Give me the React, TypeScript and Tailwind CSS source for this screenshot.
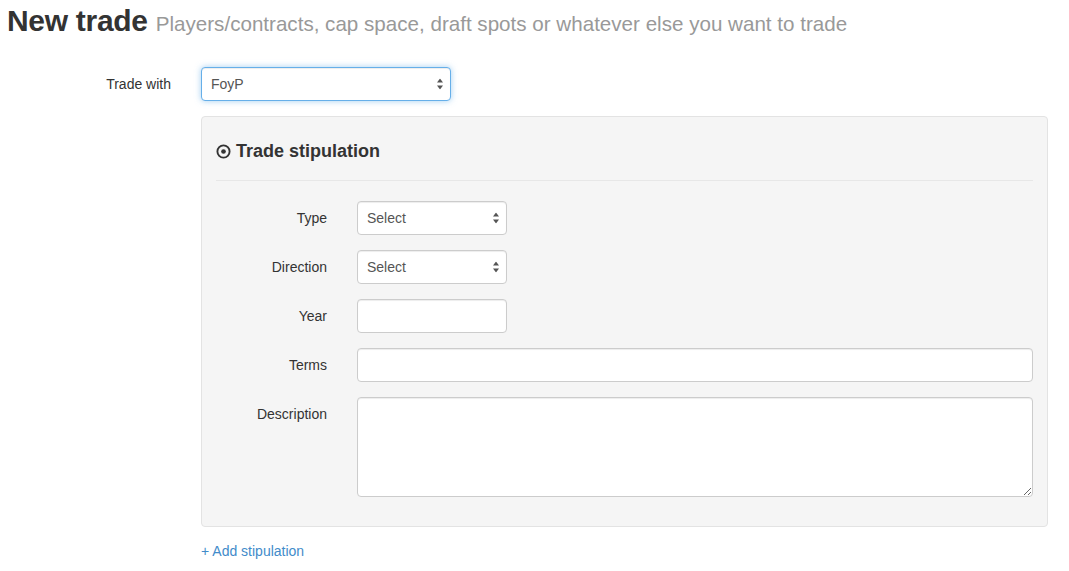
import { ReactNode } from 'react';

const SelectArrows = () => (
  <svg
    className="pointer-events-none absolute right-[8px] top-1/2 -translate-y-1/2"
    width="6"
    height="11"
    viewBox="0 0 6 11"
  >
    <path d="M3 0 L6 4 L0 4 Z" fill="#555" />
    <path d="M0 7 L6 7 L3 11 Z" fill="#555" />
  </svg>
);

interface FakeSelectProps {
  value: string;
  className?: string;
  focused?: boolean;
}

const FakeSelect = ({ value, className = '', focused = false }: FakeSelectProps) => (
  <div className={`relative ${className}`}>
    <select
      defaultValue={value}
      className={`h-[34px] w-full appearance-none rounded-[4px] border bg-white pl-[9px] pr-6 text-[14px] text-[#555] outline-none ${
        focused
          ? 'border-[#66afe9] shadow-[inset_0_1px_1px_rgba(0,0,0,0.075),0_0_6px_rgba(102,175,233,0.6)]'
          : 'border-[#ccc] shadow-[inset_0_1px_1px_rgba(0,0,0,0.075)]'
      }`}
    >
      <option>{value}</option>
    </select>
    <SelectArrows />
  </div>
);

const FormRow = ({ label, children, last = false }: { label: string; children: ReactNode; last?: boolean }) => (
  <div className={`flex items-start ${last ? '' : 'mb-[15px]'}`}>
    <label className="w-[141px] shrink-0 pr-[30px] pt-[7px] text-right text-[14px] leading-[20px] text-[#333]">
      {label}
    </label>
    <div className="flex-1">{children}</div>
  </div>
);

const inputCls =
  'block h-[34px] rounded-[4px] border border-[#ccc] bg-white px-[9px] text-[14px] text-[#555] shadow-[inset_0_1px_1px_rgba(0,0,0,0.075)] outline-none';

export default function App() {
  return (
    <div
      className="min-h-[571px] bg-white pl-[7px] pr-[21px] text-[14px] text-[#333]"
      style={{ fontFamily: '"Liberation Sans", Arial, sans-serif' }}
    >
      <h1 className="pt-[4px] text-[30px] font-bold leading-[33px] tracking-[-0.3px] text-[#333]">
        New trade{' '}
        <small className="text-[20.6px] font-normal tracking-normal text-[#999]">
          Players/contracts, cap space, draft spots or whatever else you want to trade
        </small>
      </h1>

      <div className="mt-[27px] flex items-start">
        <label className="w-[194px] shrink-0 pr-[30px] pt-[7px] text-right leading-[20px]">Trade with</label>
        <div className="flex-1">
          <FakeSelect value="FoyP" focused className="w-[250px]" />

          <div className="mt-[15px] rounded-[4px] border border-[#e3e3e3] bg-[#f5f5f5] px-[14px] pb-[14px] pt-[24px]">
            <h4 className="flex items-center gap-[5px] text-[18px] font-bold leading-[20px] text-[#333]">
              <svg width="15" height="15" viewBox="0 0 16 16">
                <circle cx="8" cy="8" r="6.5" fill="none" stroke="#333" strokeWidth="2" />
                <circle cx="8" cy="8" r="2.5" fill="#333" />
              </svg>
              Trade stipulation
            </h4>
            <hr className="mb-[20px] mt-[19px] border-0 border-t border-[#e7e7e7]" />

            <FormRow label="Type">
              <FakeSelect value="Select" className="w-[150px]" />
            </FormRow>
            <FormRow label="Direction">
              <FakeSelect value="Select" className="w-[150px]" />
            </FormRow>
            <FormRow label="Year">
              <input type="text" className={`${inputCls} w-[150px]`} />
            </FormRow>
            <FormRow label="Terms">
              <input type="text" className={`${inputCls} w-full`} />
            </FormRow>
            <FormRow label="Description">
              <textarea
                className="block h-[100px] w-full rounded-[4px] border border-[#ccc] bg-white px-[9px] py-[6px] text-[14px] text-[#555] shadow-[inset_0_1px_1px_rgba(0,0,0,0.075)] outline-none"
              />
            </FormRow>
          </div>

          <a href="#" className="mt-[14px] block leading-[20px] text-[#428bca]">
            + Add stipulation
          </a>
        </div>
      </div>
    </div>
  );
}
